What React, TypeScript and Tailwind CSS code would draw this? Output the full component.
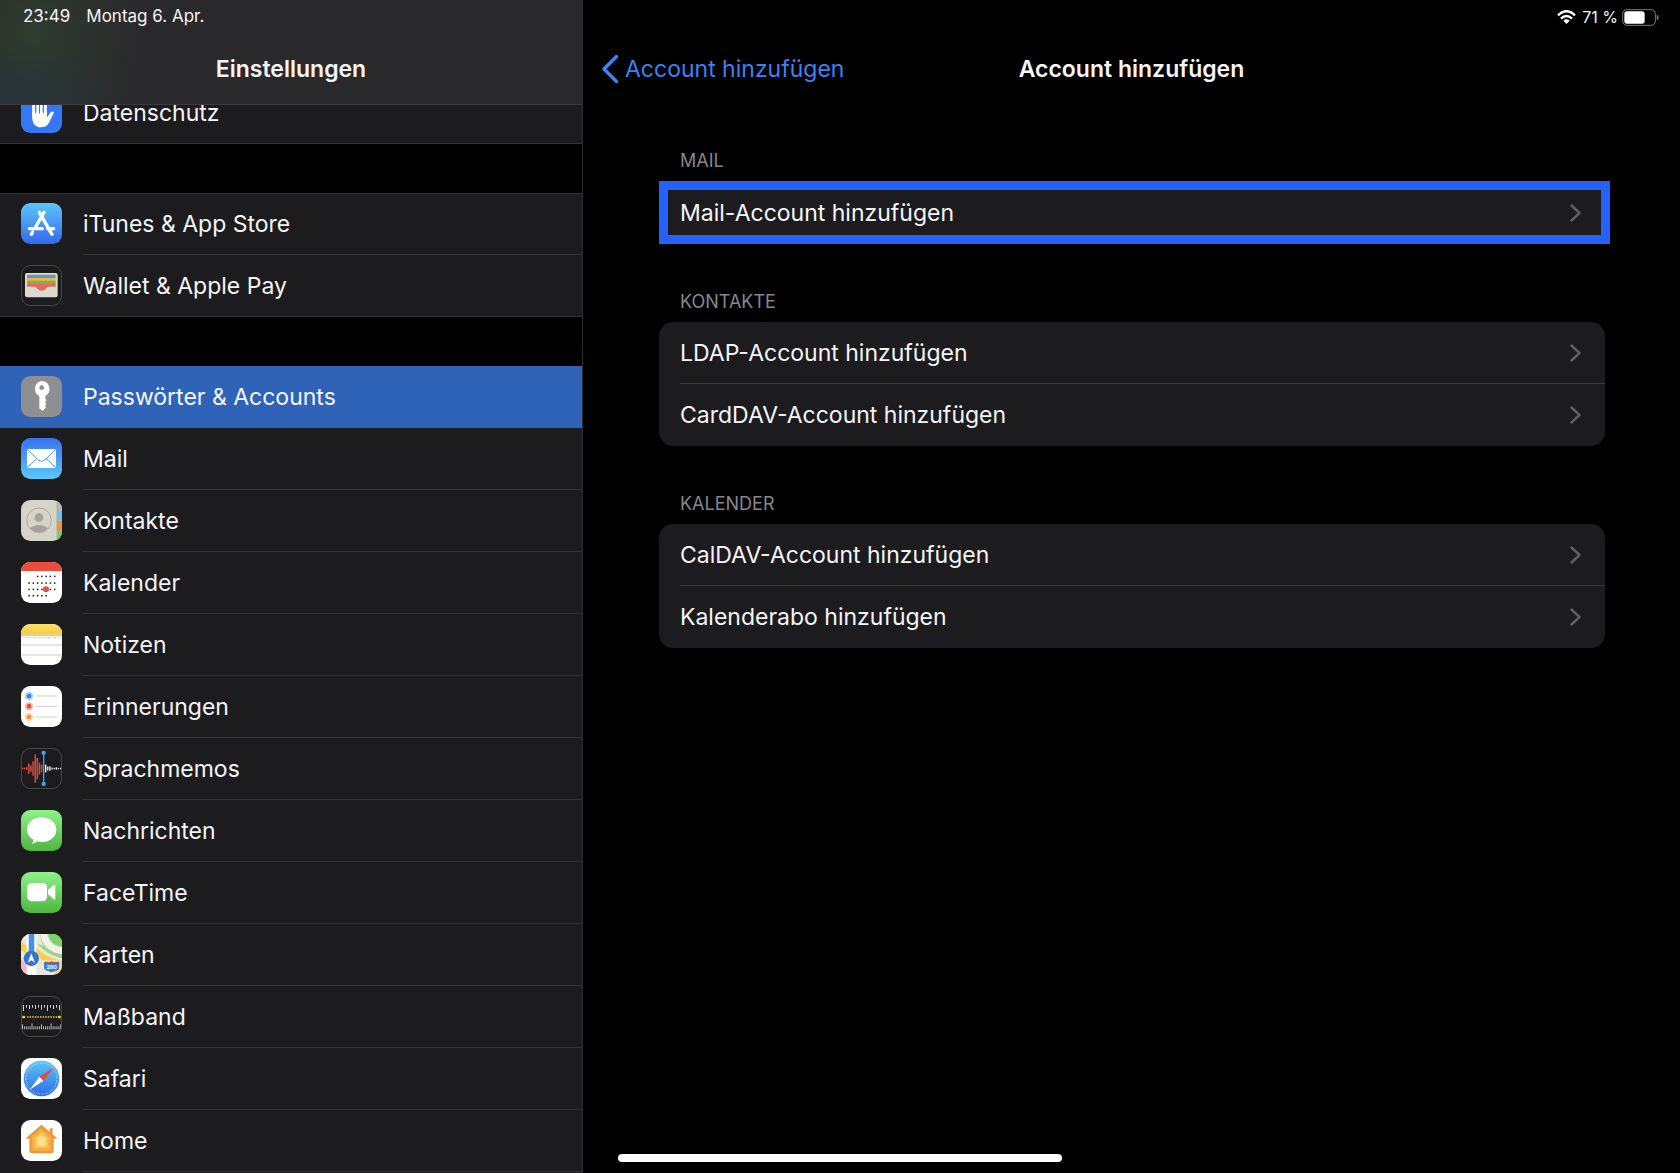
import type { ReactNode } from "react";

/* Every app icon is drawn on a 123 x 123 grid. */
function Tile({ id, children, outlined = false }: { id: string; children: ReactNode; outlined?: boolean }) {
  return (
    <svg viewBox="0 0 123 123" className="h-[41px] w-[41px] shrink-0" aria-hidden="true">
      <defs>
        <clipPath id={`tile-${id}`}>
          <rect width="123" height="123" rx="28" />
        </clipPath>
      </defs>
      <g clipPath={`url(#tile-${id})`}>{children}</g>
      {outlined && <rect x="1.5" y="1.5" width="120" height="120" rx="27" fill="none" stroke="#48484a" strokeWidth="3" />}
    </svg>
  );
}

function Fill({ id, from, to }: { id: string; from: string; to: string }) {
  return (
    <>
      <linearGradient id={`fill-${id}`} x1="0" y1="0" x2="0" y2="1">
        <stop offset="0" stopColor={from} />
        <stop offset="1" stopColor={to} />
      </linearGradient>
      <rect width="123" height="123" fill={`url(#fill-${id})`} />
    </>
  );
}

function PrivacyIcon() {
  return (
    <Tile id="privacy">
      <rect width="123" height="123" fill="#3478f6" />
      <g stroke="#fff" strokeWidth="9" strokeLinecap="round" fill="none">
        <path d="M38 76V34M50 70V22M61 70V18M73 74V26" />
      </g>
      <path
        d="M34 60h43v17l12-16c4-5 11-3 9 3L84 92c-5 9-12 14-24 14-16 0-26-11-26-28z"
        fill="#fff"
      />
      <path d="M44 36v28M55.500 30v34M67 32v32" stroke="#3478f6" strokeWidth="3" />
    </Tile>
  );
}

function StoreIcon() {
  return (
    <Tile id="store">
      <Fill id="store" from="#5cc6fa" to="#3469ec" />
      <g stroke="#fff" strokeWidth="10" strokeLinecap="round">
        <path d="M69 28L42 75M35 87L31 94M55 28L93 94" />
        <path d="M25 77H64M80 77H98" />
      </g>
    </Tile>
  );
}

function WalletIcon() {
  return (
    <Tile id="wallet" outlined>
      <rect width="123" height="123" fill="#1c1c1e" />
      <rect x="12" y="24" width="98" height="73" rx="6" fill="#dbd8cf" />
      <rect x="18" y="29" width="86" height="12" rx="4" fill="#5a9cc4" />
      <rect x="18" y="39" width="86" height="9" fill="#f0b442" />
      <rect x="18" y="47" width="86" height="9" fill="#7ab455" />
      <path d="M18 55h86v10H84c-8 0-10 12-22 12S48 65 40 65H18z" fill="#e8695b" />
    </Tile>
  );
}

function KeyIcon() {
  return (
    <Tile id="key">
      <rect width="123" height="123" fill="#8e8e93" />
      <path
        d="M62 15a24 24 0 0 1 11 45v8l4 5-5 6 4 5-4 5 3 5-10 11-10-8V60A24 24 0 0 1 62 15z"
        fill="#fff"
      />
      <circle cx="62" cy="35" r="7" fill="#8e8e93" />
    </Tile>
  );
}

function MailIcon() {
  return (
    <Tile id="mail">
      <Fill id="mail" from="#3a70ee" to="#5bc8fa" />
      <rect x="18" y="33" width="87" height="57" rx="5" fill="#fff" />
      <path d="M20 35L52 66q10 9 20 0L103 35M20 88L47 62M103 88L76 62" fill="none" stroke="#4a97f4" strokeWidth="3" />
    </Tile>
  );
}

function ContactsIcon() {
  return (
    <Tile id="contacts">
      <rect width="123" height="123" fill="#d5d4c9" />
      <rect x="108" width="15" height="32" fill="#b9b8ae" />
      <rect x="108" y="32" width="15" height="30" fill="#6fc0f7" />
      <rect x="108" y="62" width="15" height="31" fill="#e9973a" />
      <rect x="108" y="93" width="15" height="30" fill="#6dcf66" />
      <path d="M108 0V123" stroke="#a5a297" strokeWidth="2" />
      <clipPath id="portrait">
        <circle cx="54" cy="61" r="36" />
      </clipPath>
      <g clipPath="url(#portrait)" fill="#a5a297">
        <circle cx="54" cy="53" r="13" />
        <ellipse cx="54" cy="92" rx="29" ry="17" />
      </g>
      <circle cx="54" cy="61" r="37" fill="none" stroke="#a5a297" strokeWidth="2.5" />
    </Tile>
  );
}

function CalendarIcon() {
  const rows = [
    { y: 43, from: 2, to: 6 },
    { y: 63, from: 0, to: 6 },
    { y: 82, from: 0, to: 6 },
    { y: 101, from: 0, to: 4 },
  ];
  return (
    <Tile id="calendar">
      <rect width="123" height="123" fill="#fff" />
      <rect width="123" height="27" fill="#eb4d3d" />
      {rows.map((row) =>
        Array.from({ length: row.to - row.from + 1 }, (_, i) => (
          <rect key={`${row.y}-${i}`} x={22 + (row.from + i) * 12.8} y={row.y - 2} width="4.5" height="4.5" fill="#1c1c1e" />
        )),
      )}
      <circle cx="75" cy="82" r="9" fill="#eb4d3d" />
    </Tile>
  );
}

function NotesIcon() {
  return (
    <Tile id="notes">
      <rect width="123" height="123" fill="#fff" />
      <linearGradient id="notes-top" x1="0" y1="0" x2="0" y2="1">
        <stop offset="0" stopColor="#fae06a" />
        <stop offset="1" stopColor="#f5ca40" />
      </linearGradient>
      <rect width="123" height="32" fill="url(#notes-top)" />
      <path d="M0 34H123" stroke="#c9bf9c" strokeWidth="3" />
      <path d="M4 41H123" stroke="#b5b5b5" strokeWidth="3" strokeDasharray="3 4" />
      <path d="M0 63H123M0 93H123" stroke="#cfcfd2" strokeWidth="3" />
    </Tile>
  );
}

function RemindersIcon() {
  const items = [
    { y: 30, color: "#3a82f7" },
    { y: 61, color: "#eb4d3d" },
    { y: 93, color: "#f19a37" },
  ];
  return (
    <Tile id="reminders">
      <rect width="123" height="123" fill="#fff" />
      {items.map((item) => (
        <g key={item.y}>
          <circle cx="24" cy={item.y} r="10.5" fill="none" stroke={item.color} strokeWidth="2" opacity="0.8" />
          <circle cx="24" cy={item.y} r="7.5" fill={item.color} />
          <path d={`M45 ${item.y}H109`} stroke="#cfcfd2" strokeWidth="3" />
        </g>
      ))}
    </Tile>
  );
}

function VoiceMemosIcon() {
  const red = [4, 4, 9, 32, 20, 44, 86, 64, 36, 22];
  const white = [24, 12, 14, 6, 4, 8, 4, 4];
  return (
    <Tile id="memos" outlined>
      <rect width="123" height="123" fill="#1c1c1e" />
      {red.map((h, i) => (
        <rect key={i} x={2 + i * 6.4} y={61.5 - h / 2} width="4.5" height={h} rx="1.5" fill="#e0493c" />
      ))}
      {white.map((h, i) => (
        <rect key={i} x={72 + i * 6.4} y={61.5 - h / 2} width="4" height={h} rx="1.5" fill="#f5f5f5" />
      ))}
      <path d="M68 15V108" stroke="#4a9fe6" strokeWidth="4" />
      <circle cx="68" cy="15" r="6.5" fill="#4a9fe6" />
      <circle cx="68" cy="108" r="6.5" fill="#4a9fe6" />
    </Tile>
  );
}

function MessagesIcon() {
  return (
    <Tile id="messages">
      <Fill id="messages" from="#8df389" to="#50b540" />
      <path
        d="M62 22c25 0 44 16 44 37S87 96 62 96c-5 0-10-1-14-2-4 4-10 7-16 8 3-4 5-8 5-13C25 82 18 71 18 59c0-21 19-37 44-37z"
        fill="#fff"
      />
    </Tile>
  );
}

function FaceTimeIcon() {
  return (
    <Tile id="facetime">
      <Fill id="facetime" from="#8df389" to="#50b540" />
      <rect x="19" y="33" width="59" height="55" rx="13" fill="#fff" />
      <path d="M81 54L98 39q5-3 5 3V79q0 6-5 3L81 67z" fill="#fff" />
    </Tile>
  );
}

function MapsIcon() {
  return (
    <Tile id="maps">
      <rect width="123" height="123" fill="#e9e6dc" />
      <path d="M46 26C66 50 94 66 123 72V0H80L58 0z" fill="#9ad682" />
      <path d="M46 0H58C58 14 62 26 68 36L46 28z" fill="#e9e6dc" />
      <path d="M84 0C86 20 102 34 123 36V0z" fill="#7fd066" />
      <path d="M0 76L30 96V123H0z" fill="#f2b6cb" />
      <path d="M0 22L20 38V62L0 48z" fill="#f7cf4a" />
      <path d="M44 40C66 62 94 74 123 82V123H104L92 98C76 88 58 72 44 62z" fill="#f7cf4a" />
      <path d="M68 -4C70 26 92 48 126 50" fill="none" stroke="#f3f1ea" strokeWidth="21" />
      <rect x="17" width="29" height="123" fill="#fff" />
      <rect x="23" width="17" height="64" fill="#4a90e2" />
      <circle cx="31" cy="73" r="23" fill="#2f74d0" />
      <path d="M31 58L42 86 31 79 20 86z" fill="#fff" />
      <path
        d="M71 80q11 5 21 0q10 5 21 0l5 9c-4 6 0 11-2 16-3 7-14 7-24 12-10-5-21-5-24-12-2-5 2-10-2-16z"
        fill="#3a7fd2"
        stroke="#fff"
        strokeWidth="3"
      />
      <path d="M71 87H113" stroke="#d9463c" strokeWidth="5" />
      <text x="92" y="106" textAnchor="middle" fontSize="16" fontWeight="700" fill="#fff" fontFamily="Inter, sans-serif">
        280
      </text>
    </Tile>
  );
}

function MeasureIcon() {
  const top = [18, 8, 12, 8, 12, 8, 14, 8, 18, 8, 12, 8, 16];
  const bottom = [15, 9, 9, 9, 9, 18, 9, 9, 9, 9, 15, 9, 9, 9, 9, 18, 9, 9, 9, 9, 15];
  return (
    <Tile id="measure" outlined>
      <rect width="123" height="123" fill="#1c1c1e" />
      {top.map((h, i) => (
        <rect key={i} x={6 + i * 9} y="27" width="3" height={h} fill="#d5d5d7" />
      ))}
      {bottom.map((h, i) => (
        <rect key={i} x={3 + i * 5.75} y={100 - h} width="2.5" height={h} fill="#d5d5d7" />
      ))}
      <path d="M18 63H108" stroke="#f2cd3e" strokeWidth="4" strokeDasharray="4.500 3.300" />
      <rect x="4" y="59" width="8" height="8" rx="2" fill="#f2cd3e" />
      <rect x="111" y="59" width="8" height="8" rx="2" fill="#f2cd3e" />
    </Tile>
  );
}

function SafariIcon() {
  return (
    <Tile id="safari">
      <rect width="123" height="123" fill="#fff" />
      <linearGradient id="compass" x1="0" y1="0" x2="0" y2="1">
        <stop offset="0" stopColor="#5cc6f5" />
        <stop offset="1" stopColor="#2f6be6" />
      </linearGradient>
      <circle cx="61.5" cy="61.5" r="53.5" fill="url(#compass)" />
      <circle cx="61.5" cy="61.5" r="47" fill="none" stroke="#cfe6fb" strokeWidth="5" strokeDasharray="1.5 3.4" opacity="0.8" />
      <path d="M98 29L67 68 55 56z" fill="#e8483c" />
      <path d="M26 95L67 68 55 56z" fill="#fff" />
    </Tile>
  );
}

function HomeIcon() {
  return (
    <Tile id="home">
      <rect width="123" height="123" fill="#fff" />
      <path
        d="M61 14L86 35V25h9v18l12 10c1 2 0 3-2 3h-7V94q0 6-6 6H31q-6 0-6-6V56H17c-2 0-3-2-1-3z"
        fill="#eb9a3c"
      />
      <path d="M61 25L91 50V92H32V50z" fill="#f5b045" />
      <path d="M61 35L82 53V84H41V53z" fill="#f8c659" />
      <path d="M61 44L74 56V77H48V56z" fill="#fbe08a" />
    </Tile>
  );
}

type Entry = { label: string; icon: ReactNode; selected?: boolean };

const services: Entry[] = [
  { label: "iTunes & App Store", icon: <StoreIcon /> },
  { label: "Wallet & Apple Pay", icon: <WalletIcon /> },
];

const apps: Entry[] = [
  { label: "Passwörter & Accounts", icon: <KeyIcon />, selected: true },
  { label: "Mail", icon: <MailIcon /> },
  { label: "Kontakte", icon: <ContactsIcon /> },
  { label: "Kalender", icon: <CalendarIcon /> },
  { label: "Notizen", icon: <NotesIcon /> },
  { label: "Erinnerungen", icon: <RemindersIcon /> },
  { label: "Sprachmemos", icon: <VoiceMemosIcon /> },
  { label: "Nachrichten", icon: <MessagesIcon /> },
  { label: "FaceTime", icon: <FaceTimeIcon /> },
  { label: "Karten", icon: <MapsIcon /> },
  { label: "Maßband", icon: <MeasureIcon /> },
  { label: "Safari", icon: <SafariIcon /> },
  { label: "Home", icon: <HomeIcon /> },
];

function EntryList({ entries }: { entries: Entry[] }) {
  return (
    <ul>
      {entries.map((entry) => (
        <li key={entry.label}>
          <button
            type="button"
            aria-current={entry.selected ? "page" : undefined}
            className={`flex h-[62px] w-full gap-[21px] pl-[21px] text-left ${entry.selected ? "bg-[#2e63b8]" : ""}`}
          >
            <span className="flex h-[61px] items-center">{entry.icon}</span>
            <span
              className={`flex h-full flex-1 items-center border-b text-[23px] leading-7 ${
                entry.selected ? "border-transparent" : "border-[#333335]"
              }`}
            >
              {entry.label}
            </span>
          </button>
        </li>
      ))}
    </ul>
  );
}

function Sidebar() {
  return (
    <aside className="flex w-[583px] shrink-0 flex-col overflow-hidden border-r border-[#2f2f31] bg-[#1c1c1e]">
      <header className="relative z-10 h-[105px] shrink-0 border-b border-[#3a3a3c] bg-[#29292b] bg-[radial-gradient(ellipse_110px_70px_at_10px_110px,#28343d,transparent),radial-gradient(ellipse_110px_150px_at_32px_36px,#2e3c2f,transparent)]">
        <div className="flex h-[34px] items-center gap-4 pl-[23px] text-[17px]">
          <span>23:49</span>
          <span>Montag 6. Apr.</span>
        </div>
        <h1 className="flex h-[70px] items-center justify-center text-[23px] font-semibold">Einstellungen</h1>
      </header>
      <nav aria-label="Einstellungen" className="-mt-[23px]">
        <EntryList entries={[{ label: "Datenschutz", icon: <PrivacyIcon /> }]} />
        <div className="relative -my-px h-[51px] border-y border-[#333335] bg-black" />
        <EntryList entries={services} />
        <div className="relative -mt-px h-[50px] border-t border-[#333335] bg-black" />
        <EntryList entries={apps} />
      </nav>
    </aside>
  );
}

function Chevron() {
  return (
    <svg viewBox="0 0 11 18" className="h-[18px] w-[11px] shrink-0" aria-hidden="true">
      <path d="M1.5 1.5L9.5 9L1.5 16.5" fill="none" stroke="#5f5f63" strokeWidth="2.4" strokeLinecap="round" strokeLinejoin="round" />
    </svg>
  );
}

function Group({ title, items }: { title: string; items: string[] }) {
  return (
    <section>
      <h3 className="px-[21px] text-lg leading-10 text-[#86868b]">{title}</h3>
      <ul className="overflow-hidden rounded-[14px] bg-[#1c1c1e]">
        {items.map((item, i) => (
          <li key={item} className="pl-[21px]">
            <button
              type="button"
              className={`flex h-[62px] w-full items-center justify-between pr-6 text-left text-[23px] leading-7 ${
                i < items.length - 1 ? "border-b border-[#38383a]" : ""
              }`}
            >
              {item}
              <Chevron />
            </button>
          </li>
        ))}
      </ul>
    </section>
  );
}

function StatusIcons() {
  return (
    <div className="flex h-[34px] items-center justify-end pr-[21px] text-base">
      <svg viewBox="0 0 57 42" className="mr-1.5 h-[14px] w-[19px]" aria-label="WLAN" role="img">
        <g fill="none" stroke="#fff" strokeWidth="7">
          <path d="M3 16Q28.500 -9 54 16" />
          <path d="M12 26Q28.500 10 45 26" />
        </g>
        <path d="M19 32Q28.500 24 38 32L28.500 42z" fill="#fff" />
      </svg>
      <span className="mr-1">71 %</span>
      <svg viewBox="0 0 111 51" className="h-[17px] w-[37px]" aria-label="Batterie" role="img">
        <rect x="2" y="2" width="98" height="47" rx="13" fill="none" stroke="#77777a" strokeWidth="3" />
        <rect x="7" y="7" width="61" height="37" rx="8" fill="#fff" />
        <path d="M104 17q6 2 6 8.500t-6 8.500z" fill="#77777a" />
      </svg>
    </div>
  );
}

export default function App() {
  return (
    <div className="flex h-screen overflow-hidden bg-black font-[Inter,'Liberation_Sans',sans-serif] text-[#f5f5f7]">
      <Sidebar />
      <main className="min-w-0 flex-1">
        <StatusIcons />
        <div className="grid h-[70px] grid-cols-[1fr_auto_1fr] items-center px-[18px] text-[23px]">
          <a href="#accounts" className="flex items-center gap-1.5 text-[#3b82f6]">
            <svg viewBox="0 0 18 30" className="h-[30px] w-[18px]" aria-hidden="true">
              <path d="M15.500 2.500L3 15L15.500 27.500" fill="none" stroke="#3b82f6" strokeWidth="3.500" strokeLinecap="round" strokeLinejoin="round" />
            </svg>
            Account hinzufügen
          </a>
          <h2 className="font-semibold">Account hinzufügen</h2>
        </div>
        <div className="flex flex-col gap-[38px] pl-[76px] pr-[75px] pt-[37px]">
          <section>
            <h3 className="px-[21px] text-lg leading-10 text-[#86868b]">MAIL</h3>
            <button
              type="button"
              className="flex h-[63px] w-[calc(100%+5px)] items-center justify-between border-[9px] border-[#2563f8] bg-[#1c1c1e] pl-3 pr-5 text-left text-[23px] leading-7"
            >
              Mail-Account hinzufügen
              <Chevron />
            </button>
          </section>
          <Group title="KONTAKTE" items={["LDAP-Account hinzufügen", "CardDAV-Account hinzufügen"]} />
          <Group title="KALENDER" items={["CalDAV-Account hinzufügen", "Kalenderabo hinzufügen"]} />
        </div>
      </main>
      <div className="fixed bottom-[11px] left-1/2 h-2 w-[444px] -translate-x-1/2 rounded-full bg-white" />
    </div>
  );
}
